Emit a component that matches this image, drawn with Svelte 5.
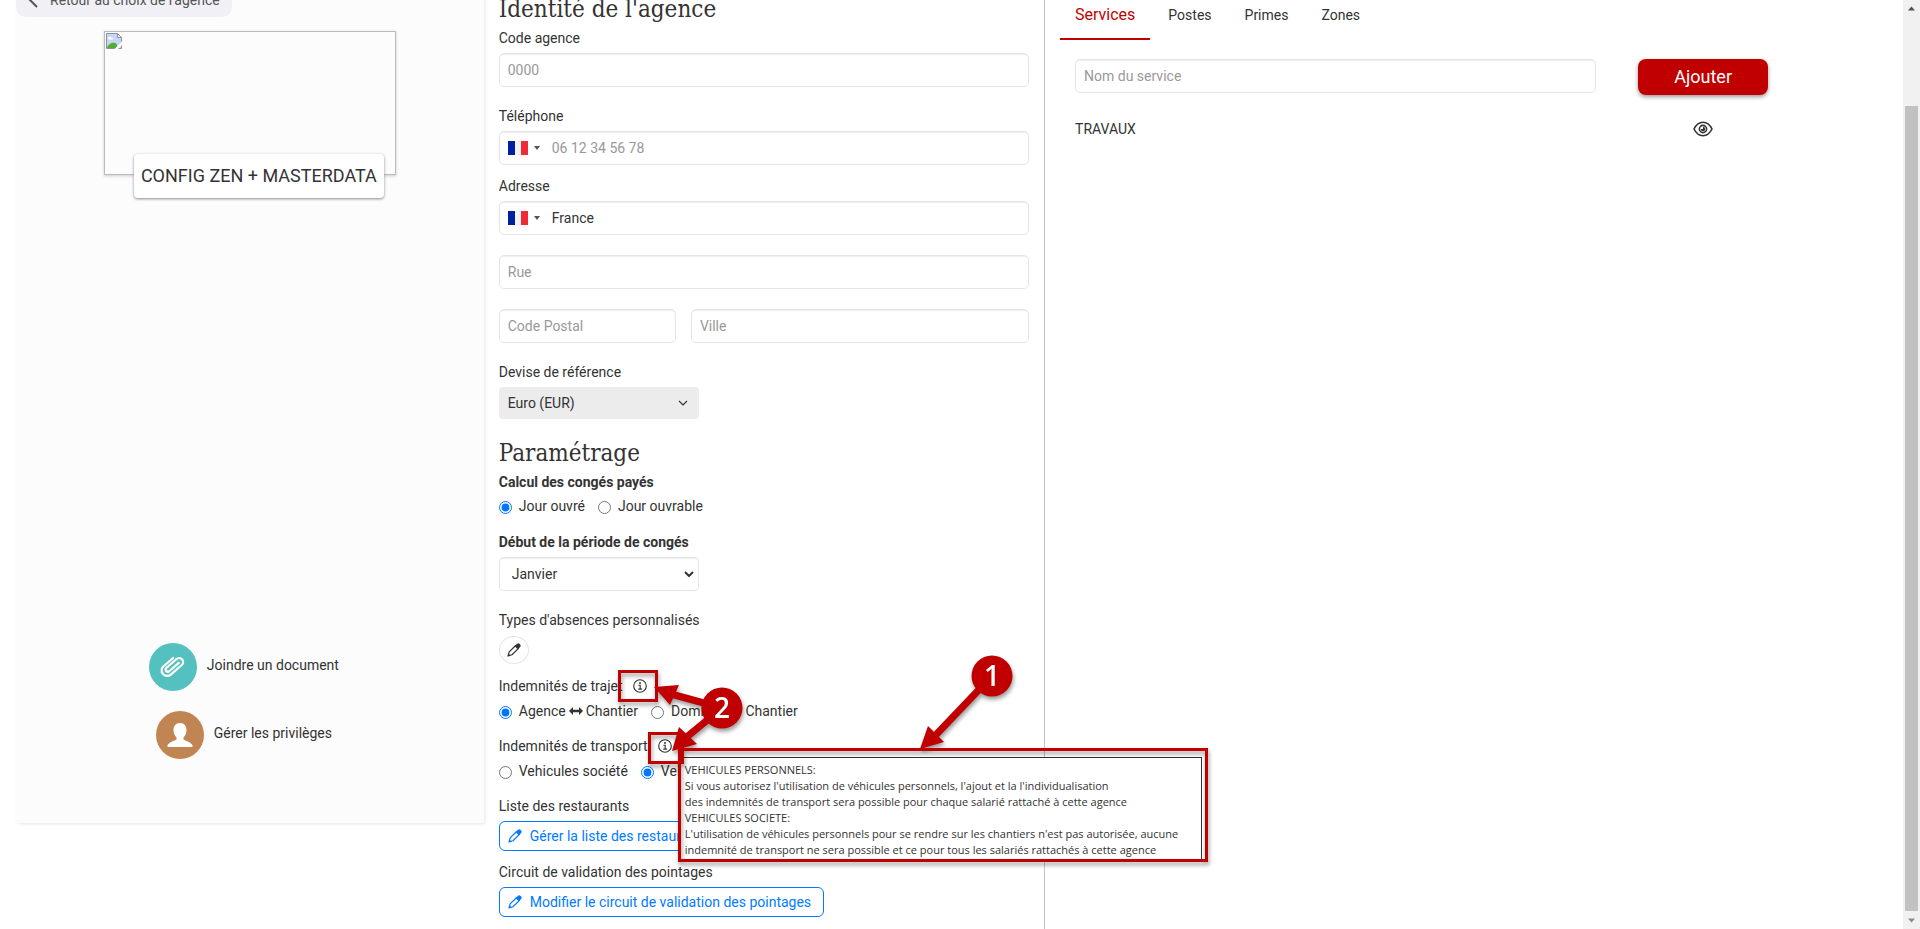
<script>
    let search = '';
    let tab = 'Services';
    let conges = 'ouvre';
    let trajet = 'agence';
    let transport = 'personnels';

    const tabs = ['Services', 'Postes', 'Primes', 'Zones'];
    const services = ['TRAVAUX'];
</script>

{#snippet pencil()}
    <svg class="pencil" viewBox="0 0 16 16" aria-hidden="true">
        <path d="M1.2 14.8l1.3-4.6 7.4-7.3 3.2 3.2-7.4 7.3z" fill="none" stroke="currentColor" stroke-width="1.4" stroke-linejoin="round" />
        <path d="M8.8 3.6l2.3-2.4a2.4 2.4 0 0 1 3.4 0l.3.3a2.4 2.4 0 0 1 0 3.4l-2.4 2.3z" fill="currentColor" />
        <path d="M.8 15.2l.9-3.2 2.3 2.3z" fill="currentColor" />
    </svg>
{/snippet}

{#snippet info()}
    <svg class="info" viewBox="0 0 16 16" aria-hidden="true">
        <circle cx="8" cy="8" r="7.2" fill="none" stroke="currentColor" stroke-width="1.3" />
        <circle cx="8" cy="4.6" r="1.1" fill="currentColor" />
        <path d="M6.2 7.2h2v4.2M6 11.6h4.4" fill="none" stroke="currentColor" stroke-width="1.3" />
    </svg>
{/snippet}

{#snippet arrows()}
    <svg class="arrows" viewBox="0 0 14 10" aria-hidden="true">
        <path d="M0 5l4-4v2.8h6V1l4 4-4 4V6.2H4V9z" fill="currentColor" />
    </svg>
{/snippet}

{#snippet flag()}
    <button type="button" class="country" aria-label="Choisir le pays">
        <span class="flag"></span>
        <span class="caret"></span>
    </button>
{/snippet}

<div class="window">
    <main class="page">
        <aside class="sidebar">
            <a class="back" href="#agences">
                <svg viewBox="0 0 10 16" aria-hidden="true"><path d="M9 1L2 8l7 7" fill="none" stroke="currentColor" stroke-width="2" /></svg>
                Retour au choix de l'agence
            </a>
            <div class="logo">
                <svg viewBox="0 0 16 16" aria-hidden="true">
                    <path d="M.5.5h11l4 4v11H.5z" fill="#c6d6f5" stroke="#8d9199" />
                    <path d="M2 5.5c0-2 3-2.5 3.5-.8C7 4.5 7.5 6 6.5 6.5h-4z" fill="#fff" />
                    <path d="M1 15c1-5 8-7 10-3.5V15z" fill="#56ab36" />
                    <path d="M11.5.5v4h4z" fill="#fff" stroke="#8d9199" />
                    <path d="M16 8.5L8.5 16H12l4-4z" fill="#fff" />
                </svg>
                <span class="agency">CONFIG ZEN + MASTERDATA</span>
            </div>
            <nav class="actions">
                <a href="#document">
                    <span class="round teal">
                        <svg viewBox="0 0 28 28" aria-hidden="true">
                            <path d="M19.5 9.5l-9 9a2.2 2.2 0 0 1-3.1-3.1L17 5.8a3.900 3.900 0 0 1 5.600 5.600l-10.300 10.300a5.500 5.500 0 0 1-7.800-7.800L13.500 5" transform="rotate(4 14 14)" fill="none" stroke="#fff" stroke-width="2.2" stroke-linecap="round" />
                        </svg>
                    </span>
                    <span class="name">Joindre un document</span>
                </a>
                <a href="#privileges">
                    <span class="round brown">
                        <svg viewBox="0 0 28 28" aria-hidden="true">
                            <path d="M14 2c4 0 6.5 2.8 6.5 7 0 3-1.2 5.8-3 7.4v2c2.5 1.6 8.5 3.2 9 6.1V26h-25v-1.5c.5-2.9 6.5-4.500 9-6.100v-2c-1.800-1.600-3-4.400-3-7.400 0-4.200 2.500-7 6.500-7z" fill="#fff" />
                        </svg>
                    </span>
                    <span class="name">Gérer les privilèges</span>
                </a>
            </nav>
        </aside>

        <section class="identity">
            <h2>Identité de l'agence</h2>
            <label class="title" for="code">Code agence</label>
            <input id="code" class="field" placeholder="0000" />

            <label class="title spaced" for="phone">Téléphone</label>
            <div class="field group">
                {@render flag()}
                <input id="phone" type="tel" placeholder="06 12 34 56 78" />
            </div>

            <label class="title near" for="country">Adresse</label>
            <div class="field group">
                {@render flag()}
                <input id="country" value="France" />
            </div>
            <input class="field line" placeholder="Rue" aria-label="Rue" />
            <div class="city line">
                <input class="field" placeholder="Code Postal" aria-label="Code Postal" />
                <input class="field" placeholder="Ville" aria-label="Ville" />
            </div>

            <label class="title spaced" for="devise">Devise de référence</label>
            <div class="select grey">
                <select id="devise"><option>Euro (EUR)</option></select>
                <svg viewBox="0 0 10 6" aria-hidden="true"><path d="M1 1l4 4 4-4" fill="none" stroke="currentColor" stroke-width="1.2" /></svg>
            </div>

            <h2 class="params">Paramétrage</h2>
            <p class="title bold">Calcul des congés payés</p>
            <div class="radios tight">
                <label><input type="radio" bind:group={conges} value="ouvre" />Jour ouvré</label>
                <label><input type="radio" bind:group={conges} value="ouvrable" />Jour ouvrable</label>
            </div>

            <label class="title bold block" for="debut">Début de la période de congés</label>
            <div class="select white">
                <select id="debut"><option>Janvier</option></select>
                <svg viewBox="0 0 10 6" aria-hidden="true"><path d="M1 1l4 4 4-4" fill="none" stroke="currentColor" stroke-width="2" /></svg>
            </div>

            <p class="title spaced">Types d'absences personnalisés</p>
            <button type="button" class="edit" aria-label="Modifier les types d'absences">{@render pencil()}</button>

            <p class="title near">Indemnités de trajet {@render info()}</p>
            <div class="radios">
                <label><input type="radio" bind:group={trajet} value="agence" />Agence {@render arrows()} Chantier</label>
                <label><input type="radio" bind:group={trajet} value="domicile" />Domicile {@render arrows()} Chantier</label>
            </div>

            <p class="title block">Indemnités de transport {@render info()}</p>
            <div class="radios">
                <label><input type="radio" bind:group={transport} value="societe" />Vehicules société</label>
                <label><input type="radio" bind:group={transport} value="personnels" />Vehicules personnels</label>
            </div>

            <p class="title block">Liste des restaurants</p>
            <button type="button" class="outline">{@render pencil()}Gérer la liste des restaurants</button>

            <p class="title near">Circuit de validation des pointages</p>
            <button type="button" class="outline">{@render pencil()}Modifier le circuit de validation des pointages</button>

            <!-- bulle d'aide et repères -->
            <div class="tooltip" role="tooltip">
                VEHICULES PERSONNELS:<br />
                Si vous autorisez l'utilisation de véhicules personnels, l'ajout et la l'individualisation<br />
                des indemnités de transport sera possible pour chaque salarié rattaché à cette agence<br />
                VEHICULES SOCIETE:<br />
                L'utilisation de véhicules personnels pour se rendre sur les chantiers n'est pas autorisée, aucune<br />
                indemnité de transport ne sera possible et ce pour tous les salariés rattachés à cette agence
            </div>
            <svg class="marks" viewBox="0 0 600 220" width="600" height="220">
                <g fill="none" stroke="#c00000" stroke-width="3">
                    <rect x="20.5" y="21.5" width="37" height="29" />
                    <rect x="50.5" y="83.5" width="33" height="29" />
                    <rect x="80.5" y="99.5" width="527" height="111" />
                </g>
                <g stroke="#c00000" stroke-width="7">
                    <path d="M123 58L72 44M123 58L84 90M393 26L332 90" />
                </g>
                <g fill="#c00000">
                    <path d="M55 37l25-2-9 20zM73 101l7-24 18 17zM321 99l8-23 16 16z" />
                    <circle cx="123" cy="58" r="20.5" />
                    <circle cx="393" cy="26" r="20.5" />
                </g>
                <text x="123" y="68">2</text>
                <text x="393" y="36">1</text>
            </svg>
        </section>

        <section class="panel">
            <nav class="tabs">
                {#each tabs as name}
                    <button type="button" class:active={tab === name} on:click={() => (tab = name)}>{name}</button>
                {/each}
            </nav>
            <div class="row add">
                <input class="field" placeholder="Nom du service" aria-label="Nom du service" bind:value={search} />
                <button type="button" class="primary">Ajouter</button>
            </div>
            {#each services as service}
                <div class="row">
                    <span>{service}</span>
                    <button type="button" class="eye" aria-label="Voir {service}">
                        <svg viewBox="0 0 20 16" aria-hidden="true">
                            <path d="M1 8c2-4 5.2-6.700 9-6.700S17 4 19 8c-2 4-5.200 6.700-9 6.700S3 12 1 8z" fill="none" stroke="currentColor" stroke-width="1.6" />
                            <circle cx="10" cy="8" r="3.6" fill="none" stroke="currentColor" stroke-width="1.6" />
                            <path d="M10 5.800a2.200 2.200 0 1 1-2.200 2.200h2.200z" fill="currentColor" />
                        </svg>
                    </button>
                </div>
            {/each}
        </section>
    </main>

    <div class="scrollbar" aria-hidden="true">
        <svg viewBox="0 0 17 17"><path d="M5 10.5l3.5-4 3.5 4z" fill="#505050" /></svg>
        <div class="track"><div class="thumb"></div></div>
        <svg viewBox="0 0 17 17"><path d="M5 6.5l3.5 4 3.5-4z" fill="#8a8a8a" /></svg>
    </div>
</div>

<style>
    :global(body) {
        margin: 0;
        background: #fff;
    }

    .window {
        display: flex;
        height: 100vh;
        overflow: hidden;
        font-family: Roboto, "Liberation Sans", sans-serif;
        font-size: 14px;
        line-height: 20px;
        color: #333;
    }

    .window * {
        box-sizing: border-box;
    }

    button, input, select {
        margin: 0;
        font: inherit;
        color: inherit;
    }

    button {
        cursor: pointer;
    }

    p {
        margin: 0;
    }

    a {
        color: inherit;
        text-decoration: none;
    }

    /* page défilée vers le bas */
    .page {
        flex: 1;
        display: grid;
        grid-template-columns: 25% 30% 45%;
        margin-top: -17px;
        padding: 0 16px;
    }

    .sidebar {
        align-self: start;
        display: flex;
        flex-direction: column;
        align-items: center;
        padding-bottom: 64px;
        background: #fcfcfc;
        box-shadow: 1px 1px 3px #e8e8e8;
    }

    .back {
        align-self: flex-start;
        display: flex;
        align-items: center;
        gap: 12px;
        height: 34px;
        padding: 0 12px;
        border-radius: 10px;
        background: #f1f0f6;
        color: #555;
    }

    .back svg {
        width: 10px;
        height: 16px;
    }

    .logo {
        position: relative;
        width: 292px;
        height: 144px;
        margin-top: 14px;
        padding: 1px;
        border: 1px solid #bbb;
        box-shadow: 0 1px 3px #ccc;
    }

    .logo svg {
        width: 16px;
        height: 16px;
    }

    .agency {
        position: absolute;
        left: 29px;
        bottom: -24px;
        padding: 12px 7px;
        border-radius: 4px;
        background: #fff;
        box-shadow: 0 1px 3px #888;
        font-size: 18px;
        white-space: nowrap;
    }

    .actions {
        display: flex;
        flex-direction: column;
        align-items: center;
        gap: 20px;
        margin-top: 468px;
        padding-right: 12px;
    }

    .actions a {
        display: flex;
        align-items: center;
        gap: 10px;
    }

    .name {
        padding-bottom: 5px;
    }

    .round {
        display: flex;
        align-items: center;
        justify-content: center;
        width: 48px;
        height: 48px;
        border-radius: 50%;
    }

    .round svg {
        width: 28px;
        height: 28px;
    }

    .teal {
        background: #54c0bf;
    }

    .brown {
        background: #c08552;
    }

    .identity {
        position: relative;
        padding: 12px 15px;
        border-right: 1px solid #c4c4c4;
    }

    h2 {
        margin: 0 0 5px;
        font-family: "Roboto Slab", "DejaVu Serif Condensed", "DejaVu Serif", serif;
        font-size: 24px;
        font-weight: 400;
        line-height: 28px;
    }

    .params {
        margin-top: 20px;
    }

    .title {
        display: flex;
        align-items: center;
        margin-bottom: 5px;
    }

    .spaced {
        margin-top: 19px;
    }

    .near {
        margin-top: 11px;
    }

    .block {
        margin-top: 15px;
    }

    .bold {
        font-weight: 700;
    }

    .field {
        display: block;
        width: 100%;
        height: 34px;
        padding: 0 8px;
        border: 1px solid #e6e6e6;
        border-radius: 5px;
        background: #fff;
        box-shadow: inset 0 1px #eee;
        outline: none;
    }

    input::placeholder {
        color: #999;
        opacity: 1;
    }

    .line {
        margin-top: 20px;
    }

    .group {
        display: flex;
        align-items: center;
    }

    .group input {
        flex: 1;
        border: 0;
        background: none;
        outline: none;
    }

    .country {
        display: flex;
        align-items: center;
        gap: 6px;
        width: 42px;
        padding: 0;
        border: 0;
        background: none;
    }

    .flag {
        width: 20px;
        height: 14px;
        background: linear-gradient(90deg, #00209f 35%, #f4f4f4 35% 65%, #ef2b3a 65%);
    }

    .caret {
        border: 3px solid transparent;
        border-top: 4px solid #555;
        border-bottom: 0;
    }

    .city {
        display: grid;
        grid-template-columns: 11fr 21fr;
        gap: 15px;
    }

    .select {
        display: grid;
        align-items: center;
        width: 200px;
        border-radius: 4px;
    }

    .select select, .select svg {
        grid-area: 1 / 1;
    }

    .select select {
        width: 100%;
        height: 32px;
        padding: 0 9px;
        border: 0;
        background: none;
        appearance: none;
        outline: none;
    }

    .select svg {
        justify-self: end;
        width: 10px;
        height: 6px;
        margin-right: 11px;
        pointer-events: none;
    }

    .grey {
        background: #ececec;
    }

    .white {
        border: 1px solid #e6e6e6;
        box-shadow: inset 0 1px #eee;
    }

    .white select {
        padding-left: 12px;
    }

    .white svg {
        margin-right: 4px;
    }

    .radios {
        display: flex;
        gap: 13px;
    }

    .tight {
        margin-top: -1px;
        padding-bottom: 1px;
    }

    .radios label {
        display: flex;
        align-items: center;
        white-space: nowrap;
    }

    .radios input {
        width: 13px;
        height: 13px;
        margin: 3px 7px 0 0;
    }

    .arrows {
        width: 14px;
        height: 10px;
        margin: 0 3px;
    }

    .info {
        width: 14px;
        height: 14px;
        margin-left: 10px;
    }

    .pencil {
        width: 14px;
        height: 14px;
    }

    .edit {
        display: flex;
        align-items: center;
        justify-content: center;
        width: 30px;
        height: 28px;
        margin: 6px 0 12px;
        padding: 0;
        border: 1px solid #e6e6e6;
        border-radius: 50%;
        background: #fff;
    }

    .outline {
        display: flex;
        align-items: center;
        gap: 8px;
        height: 30px;
        padding: 0 12px 0 8px;
        border: 1px solid #007bff;
        border-radius: 6px;
        background: #fff;
        color: #007bff;
    }

    .tooltip {
        position: absolute;
        left: 194px;
        top: 774px;
        width: 524px;
        height: 104px;
        padding: 4px 0 0 6px;
        border: 1px solid #333;
        background: #fff;
        font-family: "Open Sans", "Noto Sans", sans-serif;
        font-size: 11px;
        line-height: 16px;
        white-space: nowrap;
    }

    .marks {
        position: absolute;
        left: 115px;
        top: 667px;
        overflow: visible;
        pointer-events: none;
        filter: drop-shadow(1px 3px 2px rgba(0, 0, 0, 0.4));
    }

    .marks text {
        fill: #fff;
        font-family: "Open Sans", sans-serif;
        font-size: 28px;
        font-weight: 600;
        text-anchor: middle;
    }

    .panel {
        padding: 7px 92px 0 15px;
    }

    .tabs {
        display: flex;
        gap: 3px;
    }

    .tabs button {
        height: 50px;
        padding: 2px 15px 0;
        border: 0;
        border-bottom: 2px solid transparent;
        background: none;
    }

    .tabs .active {
        border-color: #c00000;
        color: #c00000;
        font-size: 16px;
    }

    .row {
        display: grid;
        grid-template-columns: 9fr 3fr;
        align-items: center;
        justify-items: center;
        padding-top: 24px;
    }

    .row > :first-child {
        justify-self: stretch;
        width: auto;
        margin: 0 15px;
    }

    .add {
        align-items: start;
        padding-top: 19px;
    }

    .primary {
        width: 130px;
        height: 36px;
        border: 0;
        border-radius: 8px;
        background: #c00000;
        box-shadow: 0 2px 4px #999;
        color: #fff;
        font-size: 18px;
    }

    .eye {
        display: flex;
        padding: 0;
        border: 0;
        background: none;
    }

    .eye svg {
        width: 20px;
        height: 16px;
    }

    .scrollbar {
        display: flex;
        flex-direction: column;
        width: 17px;
        background: #f1f1f1;
    }

    .track {
        flex: 1;
        display: flex;
        align-items: flex-end;
        padding: 0 2px 1px;
    }

    .thumb {
        flex: 1;
        height: 90%;
        background: #c1c1c1;
    }
</style>
